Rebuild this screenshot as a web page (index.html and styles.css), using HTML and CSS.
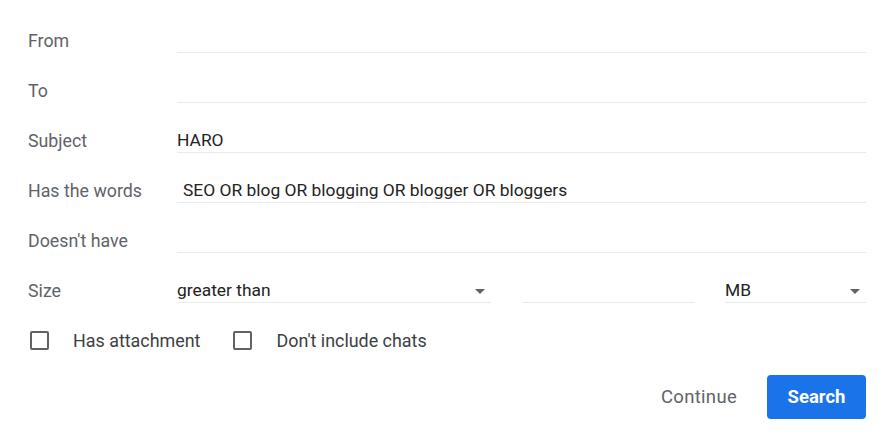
FILE: index.html
```html
<!DOCTYPE html>
<html>
<head>
<meta charset="utf-8">
<link rel="stylesheet" href="styles.css">
</head>
<body>
<div class="form">
  <div class="row"><div class="label">From</div><div class="field"></div></div>
  <div class="row"><div class="label">To</div><div class="field"></div></div>
  <div class="row"><div class="label">Subject</div><div class="field">HARO</div></div>
  <div class="row"><div class="label">Has the words</div><div class="field indent">SEO OR blog OR blogging OR blogger OR bloggers</div></div>
  <div class="row"><div class="label">Doesn't have</div><div class="field"></div></div>
  <div class="row"><div class="label">Size</div>
    <div class="size">
      <div class="field select sel-op">greater than<span class="arrow"></span></div>
      <div class="field num"></div>
      <div class="field select sel-unit">MB<span class="arrow"></span></div>
    </div>
  </div>
  <div class="checks">
    <label class="check"><span class="box"></span>Has attachment</label>
    <label class="check"><span class="box"></span>Don't include chats</label>
  </div>
  <div class="actions">
    <button class="btn text">Continue</button>
    <button class="btn primary">Search</button>
  </div>
</div>
</body>
</html>
```
FILE: styles.css
```css
html, body { margin: 0; padding: 0; background: #fff; }
body { font-family: Roboto, "Noto Sans", Arial, sans-serif; font-size: 17.4px; }
.form { padding: 28px 30px 0 28px; }
.row { display: grid; grid-template-columns: 149px 1fr; height: 50px; }
.label { color: #5f6368; line-height: 25px; height: 25px; font-size: 17.8px; }
.field { height: 25px; line-height: 25px; box-sizing: border-box; border-bottom: 1px solid #e8eaed; color: #222; position: relative; }
.field.indent { padding-left: 6px; }
.size { display: flex; }
.sel-op { width: 314px; }
.num { width: 173px; margin-left: 31px; }
.sel-unit { width: 141px; margin-left: 30px; }
.arrow { position: absolute; right: 6px; top: 11px; width: 0; height: 0; border-left: 5px solid transparent; border-right: 5px solid transparent; border-top: 5px solid #5f6368; }
.checks { display: flex; height: 25px; align-items: center; font-size: 17.9px; }
.check { display: flex; align-items: center; color: #3c4043; }
.box { width: 19px; height: 19px; box-sizing: border-box; border: 2px solid #5f6368; border-radius: 2px; margin: 0 24px 0 2px; }
.check + .check { margin-left: 31px; }
.actions { display: flex; justify-content: flex-end; margin-top: 22px; }
.btn { font-family: Roboto, Arial, sans-serif; height: 44px; border: none; border-radius: 4px; cursor: pointer; }
.btn.text { background: transparent; color: #5f6368; padding: 0; margin-right: 30px; font-size: 18.5px; font-weight: 400; letter-spacing: 0.3px; }
.btn.primary { background: #1a73e8; color: #fff; padding: 0; width: 99px; font-size: 18.5px; font-weight: 700; }
```
